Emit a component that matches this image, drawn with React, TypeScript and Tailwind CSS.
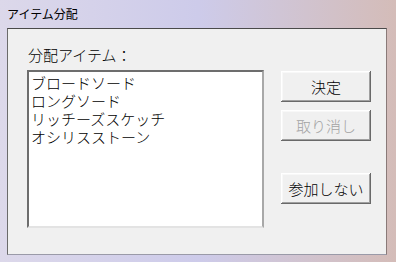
const jp = { fontFamily: '"MS UI Gothic", "Noto Sans CJK JP", sans-serif' };

const items = ["ブロードソード", "ロングソード", "リッチーズスケッチ", "オシリスストーン"];

function DlgButton({ label, disabled }: { label: string; disabled?: boolean }) {
  return (
    <button
      className={
        "h-[31px] w-[90px] bg-[#f0f0f0] text-[15px] font-light leading-[18px] shadow-[inset_-1px_-1px_#696969,inset_1px_1px_#ffffff,inset_-2px_-2px_#a0a0a0,inset_2px_2px_#f8f8f8] " +
        (disabled ? "text-[#a3a3a3]" : "text-black")
      }
      style={jp}
    >
      {label}
    </button>
  );
}

export default function App() {
  return (
    <div
      className="flex h-[262px] w-[396px] flex-col overflow-hidden bg-gradient-to-r from-[#dcd8ea] via-[#cdcbea] to-[#d4bcb8]"
      style={jp}
    >
      {/* title bar */}
      <div className="flex h-[28px] items-start pl-[7px] pt-[6px] text-[12px] leading-[16px] text-black">
        アイテム分配
      </div>

      {/* client area */}
      <div className="mb-[7px] ml-[7px] mr-[9px] flex flex-1 border border-t-[#4a4a4a] border-l-[#6a6a6a] border-r-[#8a7a78] border-b-[#9a9aa8] bg-[#f0f0f0]">
        <div className="ml-[19px] mt-[17px] flex flex-col">
          <div className="pl-[1px] text-[15px] font-light leading-[18px] text-black">分配アイテム：</div>
          <div className="mt-[6px] h-[158px] w-[237px] border-2 border-t-[#6d6d6d] border-l-[#6d6d6d] border-b-[#e3e3e3] border-r-[#a8a8a8] bg-white pl-[2px] pt-[2px]">
            {items.map((it) => (
              <div key={it} className="h-[18px] text-[15px] font-light leading-[18px] text-black">
                {it}
              </div>
            ))}
          </div>
        </div>

        <div className="ml-[17px] mt-[42px] flex flex-col">
          <DlgButton label="決定" />
          <div className="mt-[8px]">
            <DlgButton label="取り消し" disabled />
          </div>
          <div className="mt-[32px]">
            <DlgButton label="参加しない" />
          </div>
        </div>
      </div>
    </div>
  );
}
